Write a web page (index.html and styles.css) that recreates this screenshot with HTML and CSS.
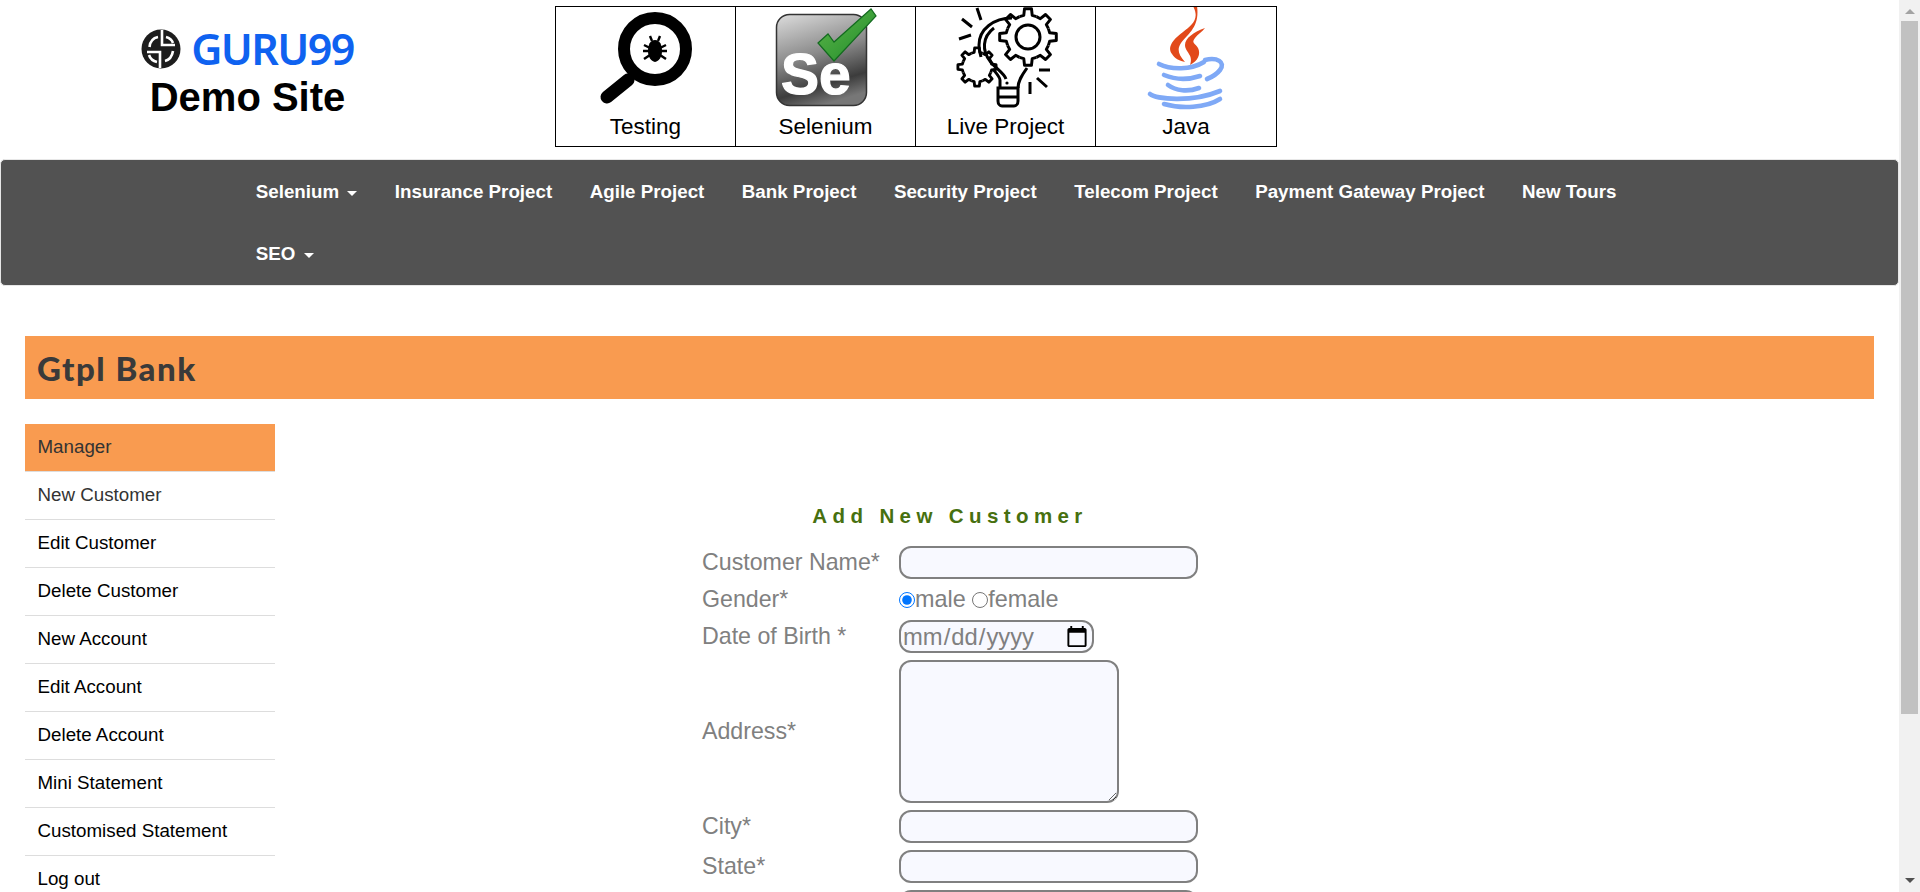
FILE: index.html
```html
<!DOCTYPE html>
<html lang="en">
<head>
<meta charset="utf-8">
<title>Gtpl Bank</title>
<link rel="stylesheet" href="styles.css">
</head>
<body>
<div class="app">
  <div class="page">
    <header class="top">
      <div class="brand">
        <div class="logo">
          <svg class="logo-mark" viewBox="0 0 40 40" width="40" height="40">
            <circle cx="20" cy="20" r="19.5" fill="#1d1d1d"/>
            <path d="M21 1 V16 H34 M19 39 V23 H6 M17 8 C12 9 9 13 8.500 18 M25 8 C29 9 31 11 32 14 M8 26 C9 29 12 32 16 33 M24 32 C28 31 31 28 32 22" fill="none" stroke="#fff" stroke-width="2.600"/>
          </svg>
          <span class="logo-word">GURU99</span>
        </div>
        <div class="demo">Demo Site</div>
      </div>
      <div class="tiles">
        <a class="tile">
          <svg class="tile-icon" viewBox="0 0 120 105">
            <line x1="42" y1="73" x2="21" y2="90" stroke="#000" stroke-width="13" stroke-linecap="round"/>
            <circle cx="69" cy="42" r="31" fill="#fff" stroke="#000" stroke-width="12"/>
            <path d="M69 33 C74 33 76 38 76 44 C76 50 73 54 69 55 C65 54 62 50 62 44 C62 38 64 33 69 33Z" fill="#000"/>
            <path d="M64 29 L66 34 M74 29 L72 34 M58 38 L64 41 M80 38 L74 41 M57 44 H63 M81 44 H75 M58 52 L64 48 M80 52 L74 48" stroke="#000" stroke-width="2.400" fill="none"/>
          </svg>
          <span>Testing</span>
        </a>
        <a class="tile">
          <svg class="tile-icon" viewBox="0 0 120 105">
            <defs>
              <linearGradient id="seBox" x1="0.2" y1="0" x2="0.5" y2="1">
                <stop offset="0" stop-color="#d4d4d4"/>
                <stop offset="0.45" stop-color="#8b8b8b"/>
                <stop offset="0.8" stop-color="#3c3c3c"/>
                <stop offset="1" stop-color="#777"/>
              </linearGradient>
              <linearGradient id="seTick" x1="0" y1="0" x2="1" y2="1">
                <stop offset="0" stop-color="#5fb84a"/>
                <stop offset="1" stop-color="#1f8a2a"/>
              </linearGradient>
            </defs>
            <rect x="10.500" y="7.500" width="90" height="91" rx="13" fill="url(#seBox)" stroke="#333" stroke-width="1.500"/>
            <text class="se-text" x="15" y="87">Se</text>
            <path d="M52 36 L62 27 L68 35 L105 2 L110 9 L68 54 Z" fill="url(#seTick)" stroke="#136b1f" stroke-width="1.200"/>
          </svg>
          <span>Selenium</span>
        </a>
        <a class="tile">
          <svg class="tile-icon" viewBox="0 0 120 105">
            <defs>
              <g id="sector" fill="none" stroke="#000" stroke-linejoin="round">
                <path d="M-9.180-22.170 L-4.580-23.560 L-3.780-30.770 H3.780 L4.580-23.560 L9.180-22.170"/>
              </g>
              <g id="gear">
                <use href="#sector"/>
                <use href="#sector" transform="rotate(45)"/>
                <use href="#sector" transform="rotate(90)"/>
                <use href="#sector" transform="rotate(135)"/>
                <use href="#sector" transform="rotate(180)"/>
                <use href="#sector" transform="rotate(225)"/>
                <use href="#sector" transform="rotate(270)"/>
                <use href="#sector" transform="rotate(315)"/>
              </g>
            </defs>
            <g transform="translate(31 60) scale(.62)" stroke-width="4.600"><use href="#gear"/></g>
            <path d="M66 11 C48 11 33 22 33 38 C33 42 34 46 35 50" fill="none" stroke="#000" stroke-width="3"/>
            <path d="M48 21 C36 30 36 44 44 54 C50 62 58 66 60 72" fill="none" stroke="#000" stroke-width="3"/>
            <path d="M54 81 V73 C54 70 50 66 47 62 M72 81 C72 74 76 68 81 61" fill="none" stroke="#000" stroke-width="3"/>
            <path d="M52 81 H72 V94 C72 97 70 99 68 99 H56 C54 99 52 97 52 94 Z M52 90 H72" fill="#fff" stroke="#000" stroke-width="3"/>
            <g transform="translate(82 30) scale(.92)" stroke-width="3.200"><use href="#gear"/></g>
            <circle cx="82" cy="30" r="12" fill="none" stroke="#000" stroke-width="3"/>
            <circle cx="61" cy="76" r="1.600" fill="#000"/>
            <path d="M16 12 L26 20 M31 1 L35 13 M13 32 L25 28 M93 63 H104 M91 71 L101 80 M84 75 V87" stroke="#000" stroke-width="3" fill="none"/>
          </svg>
          <span>Live Project</span>
        </a>
        <a class="tile">
          <svg class="tile-icon" viewBox="0 0 120 105">
            <path d="M67 -1 C74 12 66 18 57 25 C46 33 41 41 46 47 C49 52 54 54 59 55 C52 47 51 42 55 36 C62 27 74 20 71 -1Z" fill="#e2491a"/>
            <path d="M79 21 C68 25 59 31 59 38 C59 45 68 48 64 58 C72 54 75 47 72 41 C69 36 65 36 69 31 C72 27 76 25 79 21Z" fill="#e2491a"/>
            <path d="M33 57 C45 63 65 63 78 55 M79 53 C91 50 100 55 94 63 C91 67 86 70 81 72 M38 68 C50 73 62 73 74 69 M42 78 C50 84 62 85 73 81 M24 87 C30 92 65 96 94 84 M38 97 C55 102 80 101 94 92" fill="none" stroke="#7fa9f6" stroke-width="4.600" stroke-linecap="round"/>
          </svg>
          <span>Java</span>
        </a>
      </div>
    </header>

    <nav class="navbar">
      <ul class="nav-list">
        <li><a>Selenium <i class="caret"></i></a></li>
        <li><a>Insurance Project</a></li>
        <li><a>Agile Project</a></li>
        <li><a>Bank Project</a></li>
        <li><a>Security Project</a></li>
        <li><a>Telecom Project</a></li>
        <li><a>Payment Gateway Project</a></li>
        <li><a>New Tours</a></li>
        <li><a>SEO <i class="caret"></i></a></li>
      </ul>
    </nav>

    <main class="main">
      <div class="band"><h1>Gtpl Bank</h1></div>
      <div class="columns">
        <ul class="menu">
          <li class="active"><a>Manager</a></li>
          <li class="soft"><a>New Customer</a></li>
          <li><a>Edit Customer</a></li>
          <li><a>Delete Customer</a></li>
          <li><a>New Account</a></li>
          <li><a>Edit Account</a></li>
          <li><a>Delete Account</a></li>
          <li><a>Mini Statement</a></li>
          <li><a>Customised Statement</a></li>
          <li><a>Log out</a></li>
        </ul>
        <form class="form">
          <p class="form-title">Add New Customer</p>
          <label class="lbl">Customer Name*</label>
          <input class="field" type="text">
          <label class="lbl">Gender*</label>
          <div class="gender"><input class="radio" type="radio" name="g" checked>male <input class="radio" type="radio" name="g">female</div>
          <label class="lbl">Date of Birth *</label>
          <input class="field date" type="date">
          <label class="lbl">Address*</label>
          <textarea class="field area"></textarea>
          <label class="lbl">City*</label>
          <input class="field" type="text">
          <label class="lbl">State*</label>
          <input class="field" type="text">
          <label class="lbl">PIN*</label>
          <input class="field" type="text">
        </form>
      </div>
    </main>
  </div>
  <div class="scrollbar">
    <span class="arrow up"></span>
    <span class="thumb"></span>
    <span class="arrow down"></span>
  </div>
</div>
</body>
</html>
```

FILE: styles.css
```css
* { box-sizing: border-box; }
html, body { margin: 0; height: 100%; overflow: hidden; background: #fff; }
body { font-family: "Liberation Sans", Arial, sans-serif; color: #000; }
.app { display: flex; height: 100vh; overflow: hidden; }
.page { flex: 1; min-width: 0; height: 892px; overflow: hidden; }

.top { display: flex; height: 159px; padding-top: 6px; }
.brand { width: 495px; margin-right: 60px; display: flex; flex-direction: column; align-items: center; padding-top: 22px; }
.logo { display: flex; align-items: center; gap: 10px; height: 42px; }
.logo-mark { display: block; }
.logo-word { font-family: "Noto Sans", sans-serif; font-weight: 600; font-size: 43px; line-height: 42px; color: #0f62f0; letter-spacing: -1.6px; }
.demo { font-weight: 700; font-size: 40px; line-height: 45px; margin-top: 5px; }

.tiles { display: flex; height: 141px; border: 1px solid #000; }
.tile { width: 180px; display: flex; flex-direction: column; align-items: center; border-right: 1px solid #000; font-size: 22.5px; line-height: 26px; }
.tile:last-child { width: 180px; border-right: 0; }
.tile-icon { display: block; width: 120px; height: 105px; flex: none; overflow: hidden; margin-bottom: 2px; }
.se-text { font-family: "Liberation Sans", sans-serif; font-weight: 700; font-size: 57px; fill: #fff; stroke: #fff; stroke-width: 1.2px; }

.navbar { height: 127px; background: #525252; border: 1px solid #e7e7e7; border-radius: 5px; padding-left: 236px; }
.nav-list { display: flex; flex-wrap: wrap; list-style: none; margin: 0; padding: 0; max-width: 1400px; }
.nav-list a { display: block; padding: 19px 18.75px 18px; line-height: 25px; font-size: 18.75px; font-weight: 700; color: #fff; }
.caret { display: inline-block; width: 0; height: 0; margin-left: 3px; vertical-align: middle; border-top: 5px solid #fff; border-left: 5px solid transparent; border-right: 5px solid transparent; }

.main { padding: 50px 25px 0; }
.band { height: 63px; background: #f99b50; display: flex; align-items: center; padding-left: 12px; }
.band h1 { margin: 0; font-family: Lato, sans-serif; font-weight: 900; font-size: 33px; line-height: 40px; color: #3a3a3a; letter-spacing: 1.5px; }

.columns { display: flex; margin-top: 25px; }
.menu { width: 250px; flex: none; list-style: none; margin: 0; padding: 0; font-size: 18.75px; }
.menu li { height: 48px; border-bottom: 1px solid #ddd; display: flex; align-items: center; padding: 0 0 2px 12.5px; }
.menu .active { background: #f99b50; color: #333; }
.menu .soft { color: #333; }

.form { margin-left: 427px; width: 496px; display: grid; grid-template-columns: 197px 299px; row-gap: 7px; align-items: center; align-content: start; padding-top: 77px; font-size: 23.2px; color: #808080; }
.form-title { grid-column: 1 / 3; margin: 0 0 8px; height: 30px; line-height: 30px; text-align: center; font-weight: 700; font-size: 20.5px; letter-spacing: 5.4px; color: #47700f; }
.lbl { display: block; }
.field { display: block; height: 33px; width: 299px; margin: 0; padding: 1px 1px; border: 2.5px solid #808080; border-radius: 12px; background: #f8f9ff; font: inherit; color: #808080; outline: 0; }
.date { width: 195px; font-size: 23.8px; }
.area { width: 220px; height: 143px; resize: both; }
.gender { display: flex; align-items: center; height: 25px; white-space: pre; font-size: 23.4px; }
.radio { width: 16px; height: 16px; margin: 0; }

.scrollbar { width: 21px; flex: none; height: 892px; background: #f1f1f1; display: flex; flex-direction: column; align-items: center; }
.arrow { flex: none; width: 0; height: 0; border-left: 5px solid transparent; border-right: 5px solid transparent; }
.up { margin-top: 9px; border-bottom: 5px solid #a3a3a3; }
.thumb { flex: none; width: 17px; height: 693px; margin-top: 7px; background: #c1c1c1; }
.down { margin-top: auto; margin-bottom: 9px; border-top: 5px solid #505050; }
```
